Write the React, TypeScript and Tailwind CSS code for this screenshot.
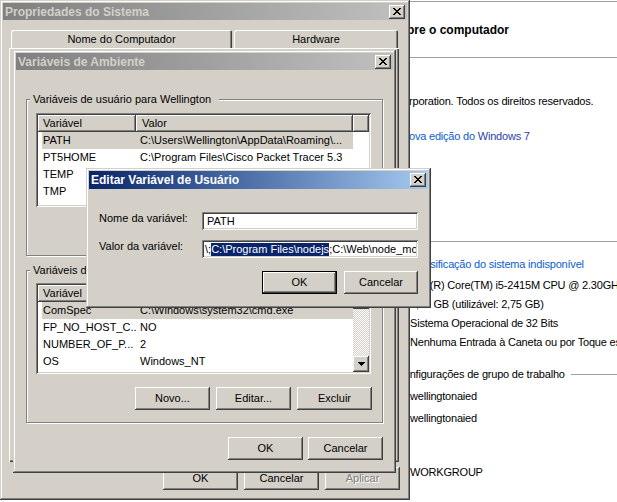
import React from "react";

const frame =
  "shadow-[inset_-1px_-1px_#404040,inset_1px_1px_#d4d0c8,inset_-2px_-2px_#808080,inset_2px_2px_#ffffff]";
const raised = "shadow-[inset_-1px_-1px_#404040,inset_1px_1px_#ffffff,inset_-2px_-2px_#808080]";
const sunken =
  "shadow-[inset_1px_1px_#808080,inset_-1px_-1px_#ffffff,inset_2px_2px_#404040,inset_-2px_-2px_#d4d0c8]";

function CloseGlyph() {
  return (
    <svg width="8" height="7" viewBox="0 0 8 7" shapeRendering="crispEdges">
      <path
        d="M0 0h2v1H0zM6 0h2v1H6zM1 1h2v1H1zM5 1h2v1H5zM2 2h4v1H2zM3 3h2v1H3zM2 4h4v1H2zM1 5h2v1H1zM5 5h2v1H5zM0 6h2v1H0zM6 6h2v1H6z"
        fill="#000"
      />
    </svg>
  );
}

function Arrow({ down }: { down?: boolean }) {
  return (
    <svg width="7" height="4" viewBox="0 0 7 4" shapeRendering="crispEdges">
      <path
        d={down ? "M0 0h7v1H0zM1 1h5v1H1zM2 2h3v1H2zM3 3h1v1H3z" : "M3 0h1v1H3zM2 1h3v1H2zM1 2h5v1H1zM0 3h7v1H0z"}
        fill="#000"
      />
    </svg>
  );
}

function TitleBar({ title, active, h }: { title: string; active?: boolean; h: string }) {
  return (
    <div
      className={`flex ${h} shrink-0 items-center justify-between pl-[2px] pr-[2px] ${
        active
          ? "bg-linear-to-r from-[#0a246a] to-[#a6caf0] text-white"
          : "bg-linear-to-r from-[#808080] to-[#c0c0c0] text-[#d4d0c8]"
      }`}
    >
      <span className="text-[12px] font-bold leading-none">{title}</span>
      <div className={`flex h-[14px] w-[16px] items-center justify-center bg-[#d4d0c8] pb-[1px] pr-[1px] ${raised}`}>
        <CloseGlyph />
      </div>
    </div>
  );
}

function Btn({ label, w = "w-[75px]", def, disabled }: { label: string; w?: string; def?: boolean; disabled?: boolean }) {
  return (
    <button
      type="button"
      className={`flex h-[23px] ${w} shrink-0 items-center justify-center bg-[#d4d0c8] text-[11px] ${raised} ${
        def ? "border border-black" : ""
      } ${disabled ? "text-[#808080] [text-shadow:1px_1px_0_#ffffff]" : "text-black"}`}
    >
      {label}
    </button>
  );
}

function Group({ label, className, children }: { label: string; className: string; children: React.ReactNode }) {
  return (
    <div className={`ml-[10px] w-[357px] shrink-0 border border-[#808080] shadow-[inset_1px_1px_#ffffff,1px_1px_#ffffff] ${className}`}>
      <div className="-mt-[7px] ml-[3px] w-fit bg-[#d4d0c8] pl-[3px] pr-[8px] leading-[13px] whitespace-nowrap">{label}</div>
      {children}
    </div>
  );
}

type Row = { name: string; value: string; selected?: boolean };

function ListView({ rows, scroll, className }: { rows: Row[]; scroll?: boolean; className: string }) {
  return (
    <div className={`ml-[9px] flex w-[335px] bg-white p-[2px] ${sunken} ${className}`}>
      <div className="flex w-[315px] flex-col overflow-hidden">
        <div className="flex h-[17px] shrink-0">
          <div className={`flex w-[98px] items-center bg-[#d4d0c8] pl-[5px] ${raised}`}>Variável</div>
          <div className={`flex w-[217px] items-center bg-[#d4d0c8] pl-[6px] ${raised}`}>Valor</div>
        </div>
        {rows.map((r) => (
          <div key={r.name} className="flex h-[17px] shrink-0 pl-[4px]">
            <div className={`flex w-[311px] items-center whitespace-nowrap ${r.selected ? "bg-[#d4d0c8]" : ""}`}>
              <span className="w-[94px] shrink-0 overflow-hidden pl-[1px]">{r.name}</span>
              <span className="pl-[4px]">{r.value}</span>
            </div>
          </div>
        ))}
      </div>
      {scroll ? (
        <div className="flex w-[16px] flex-col">
          <div className={`flex h-[16px] shrink-0 items-center justify-center bg-[#d4d0c8] ${raised}`}>
            <Arrow />
          </div>
          <div className={`h-[8px] shrink-0 bg-[#d4d0c8] ${raised}`} />
          <div className="flex-1 bg-[image:repeating-conic-gradient(#d4d0c8_0_25%,#ffffff_0_50%)] bg-[length:2px_2px]" />
          <div className={`flex h-[16px] shrink-0 items-center justify-center bg-[#d4d0c8] ${raised}`}>
            <Arrow down />
          </div>
        </div>
      ) : (
        <div className="flex w-[16px] flex-col">
          <div className={`h-[17px] bg-[#d4d0c8] ${raised}`} />
        </div>
      )}
    </div>
  );
}

function Line({ className, children }: { className: string; children: React.ReactNode }) {
  return <div className={`flex h-[16px] shrink-0 items-center ${className}`}>{children}</div>;
}

function AboutWindow() {
  return (
    <div className="absolute inset-0 flex flex-col whitespace-nowrap tracking-[-0.2px]">
      <div className="mt-[1px] h-px shrink-0 bg-[#a0a0a0]" />
      <Line className="mt-[20px] pl-[393px] text-[12px] font-bold tracking-normal">sobre o computador</Line>
      <div className="mt-[19px] h-px shrink-0 bg-[#a0a0a0]" />
      <Line className="mt-[35px] pl-[409px]">rporation. Todos os direitos reservados.</Line>
      <Line className="mt-[19px] pl-[409px]">
        <span className="text-[#0e5ccd]">ova edição do&nbsp;</span>
        <span className="text-[#2c3ea8]">Windows 7</span>
      </Line>
      <div className="mt-[97px] h-px shrink-0 bg-[#a0a0a0]" />
      <Line className="mt-[14px] pl-[409px] text-[#0e5ccd]">Classificação do sistema indisponível</Line>
      <Line className="mt-[5px] pl-[410px]">Intel(R) Core(TM) i5-2415M CPU @ 2.30GHz&nbsp;&nbsp;2.30 GHz</Line>
      <Line className="mt-[3px] pl-[410px]">4,00 GB (utilizável: 2,75 GB)</Line>
      <Line className="mt-[3px] pl-[410px]">Sistema Operacional de 32 Bits</Line>
      <Line className="mt-[3px] pl-[410px]">Nenhuma Entrada à Caneta ou por Toque está disponível para este vídeo</Line>
      <Line className="mt-[16px] pl-[396px]">
        <span>Configurações de grupo de trabalho</span>
        <span className="ml-[6px] h-px flex-1 bg-[#a0a0a0]" />
      </Line>
      <Line className="mt-[6px] pl-[410px]">wellingtonaied</Line>
      <Line className="mt-[6px] pl-[410px]">wellingtonaied</Line>
      <Line className="mt-[38px] pl-[410px]">WORKGROUP</Line>
    </div>
  );
}

function Tab({ w, children }: { w: string; children: React.ReactNode }) {
  return (
    <div
      className={`flex ${w} items-center justify-center rounded-t-[2px] bg-[#d4d0c8] shadow-[inset_1px_1px_#ffffff,inset_-1px_0_#404040,inset_-2px_0_#808080]`}
    >
      {children}
    </div>
  );
}

function SystemProperties() {
  return (
    <div className={`absolute left-0 top-0 flex h-[500px] w-[410px] flex-col bg-[#d4d0c8] p-[3px] ${frame}`}>
      <TitleBar title="Propriedades do Sistema" h="h-[17px]" />
      <div className="mt-[10px] flex h-[18px] shrink-0 gap-[2px] pl-[8px]">
        <Tab w="w-[221px]">Nome do Computador</Tab>
        <Tab w="w-[164px]">Hardware</Tab>
      </div>
      <div className="ml-[6px] h-[414px] w-[390px] shrink-0 shadow-[inset_1px_1px_#ffffff,inset_-1px_-1px_#404040,inset_-2px_-2px_#808080]" />
      <div className="mt-[5px] flex justify-end gap-[6px] pr-[7px]">
        <Btn label="OK" />
        <Btn label="Cancelar" />
        <Btn label="Aplicar" disabled />
      </div>
    </div>
  );
}

const userVars: Row[] = [
  { name: "PATH", value: "C:\\Users\\Wellington\\AppData\\Roaming\\...", selected: true },
  { name: "PT5HOME", value: "C:\\Program Files\\Cisco Packet Tracer 5.3" },
  { name: "TEMP", value: "%USERPROFILE%\\AppData\\Local\\Temp" },
  { name: "TMP", value: "%USERPROFILE%\\AppData\\Local\\Temp" },
];

const systemVars: Row[] = [
  { name: "ComSpec", value: "C:\\Windows\\system32\\cmd.exe", selected: true },
  { name: "FP_NO_HOST_C...", value: "NO" },
  { name: "NUMBER_OF_P...", value: "2" },
  { name: "OS", value: "Windows_NT" },
  { name: "Path", value: "C:\\Windows\\system32;C:\\Windows;C:\\Wi..." },
];

function EnvironmentVariables() {
  return (
    <div className={`absolute left-[13px] top-[50px] flex h-[423px] w-[383px] flex-col bg-[#d4d0c8] p-[3px] ${frame}`}>
      <TitleBar title="Variáveis de Ambiente" h="h-[17px]" />
      <Group label="Variáveis de usuário para Wellington" className="mt-[29px] pb-[48px]">
        <ListView rows={userVars} className="mt-[7px] h-[94px]" />
      </Group>
      <Group label="Variáveis do sistema" className="mt-[14px] pb-[12px]">
        <ListView rows={systemVars} scroll className="mt-[6px] h-[91px]" />
        <div className="mt-[13px] flex justify-end gap-[6px] pr-[10px]">
          <Btn label="Novo..." />
          <Btn label="Editar..." />
          <Btn label="Excluir" />
        </div>
      </Group>
      <div className="mt-[14px] flex justify-end gap-[5px] pr-[10px]">
        <Btn label="OK" />
        <Btn label="Cancelar" />
      </div>
    </div>
  );
}

function EditVariable() {
  return (
    <div className={`absolute left-[86px] top-[168px] flex h-[140px] w-[345px] flex-col bg-[#d4d0c8] p-[3px] ${frame}`}>
      <TitleBar title="Editar Variável de Usuário" active h="h-[18px]" />
      <div className="mt-[23px] flex items-start pl-[10px] pr-[10px]">
        <span className="w-[103px] shrink-0 leading-[13px]">Nome da variável:</span>
        <div className={`flex h-[18px] min-w-0 flex-1 items-center bg-white pl-[5px] ${sunken}`}>PATH</div>
      </div>
      <div className="mt-[10px] flex items-start pl-[10px] pr-[10px]">
        <span className="w-[103px] shrink-0 leading-[13px]">Valor da variável:</span>
        <div className={`flex h-[18px] min-w-0 flex-1 overflow-hidden bg-white p-[2px] ${sunken}`}>
          <div className="flex min-w-0 flex-1 items-center overflow-hidden whitespace-nowrap">
            <span className="ml-[1px] shrink-0">\;</span>
            <span className="shrink-0 bg-[#0a246a] text-white">C:\Program Files\nodejs</span>
            <span className="shrink-0">;C:\Web\node_modules</span>
          </div>
        </div>
      </div>
      <div className="mt-[13px] flex justify-end gap-[7px] pr-[10px]">
        <Btn label="OK" def />
        <Btn label="Cancelar" w="w-[74px]" />
      </div>
    </div>
  );
}

export default function App() {
  return (
    <div className="relative h-[502px] w-[617px] overflow-hidden bg-white font-[Liberation_Sans,Arial,sans-serif] text-[11px] leading-[13px] text-black">
      <AboutWindow />
      <SystemProperties />
      <EnvironmentVariables />
      <EditVariable />
    </div>
  );
}
